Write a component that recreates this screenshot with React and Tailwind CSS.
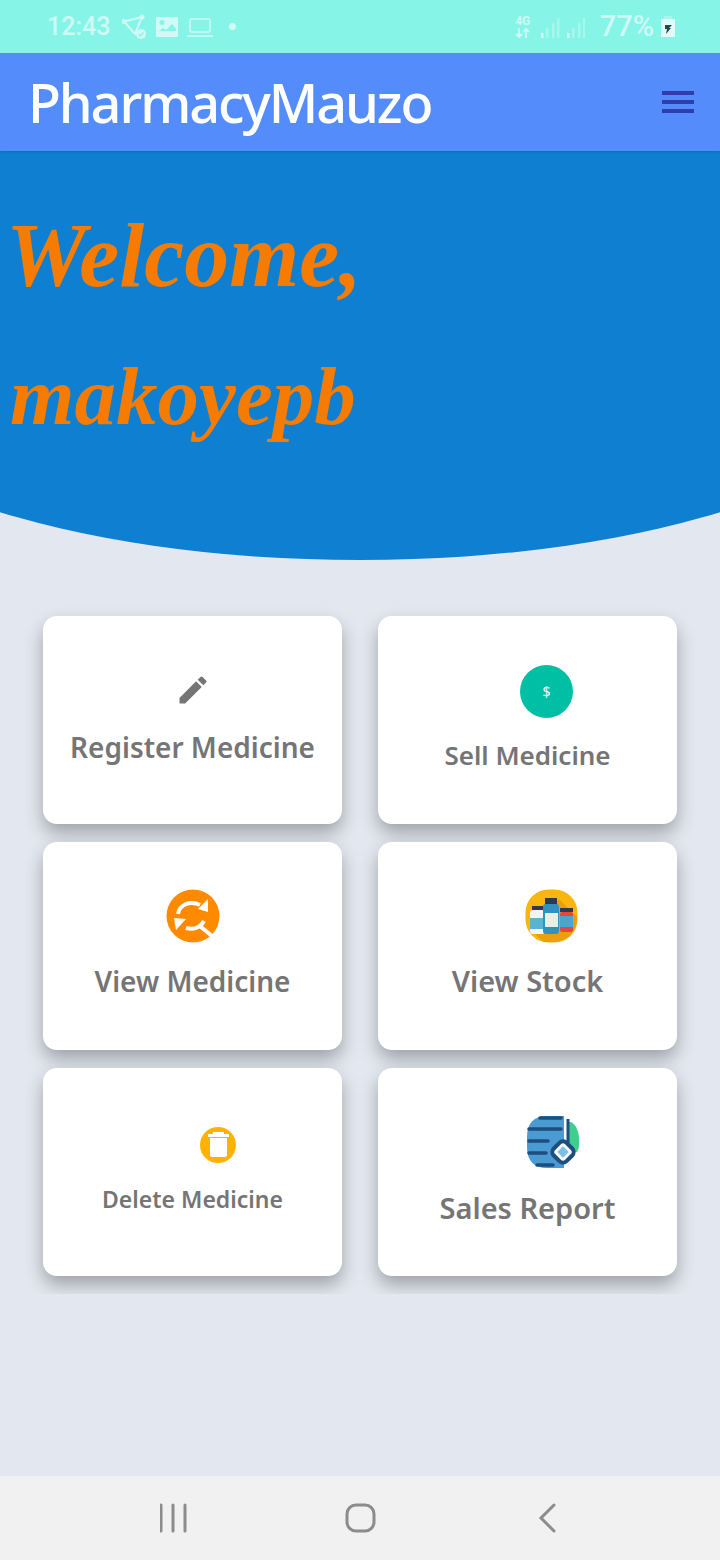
import React from "react";
import { MdEdit } from "react-icons/md";

const SellIcon = () => (
  <div className="flex h-[53px] w-[53px] items-center justify-center rounded-full bg-[#00bfa5] text-[14px] text-white">
    $
  </div>
);

const SearchSyncIcon = () => (
  <svg width="54" height="54" viewBox="0 0 54 54">
    <circle cx="27" cy="27" r="26.5" fill="#ff8a00" />
    <g fill="none" stroke="#fff" strokeWidth="4">
      <path d="M12 25c1-9 12-14 22-9" />
      <path d="M20 39c7 2 14 0 18-7" />
      <path d="M35 38l11 9" strokeLinecap="round" />
    </g>
    <polygon points="32,20 42,10 42,23" fill="#fff" />
    <polygon points="8,29 20,30 10,41" fill="#fff" />
  </svg>
);

const StockIcon = () => (
  <svg width="54" height="54" viewBox="0 0 54 54">
    <rect x="0.5" y="0.5" width="52" height="53" rx="23" fill="#fbb50f" />
    <path d="M34 10l18 18v3a23 23 0 0 1-23 22H19L6 42z" fill="#e9a00c" />
    <rect x="7" y="17" width="12" height="5" fill="#2f3a4a" />
    <rect x="5" y="21" width="15" height="24" rx="3" fill="#f2f4f4" />
    <rect x="5" y="29" width="15" height="11" fill="#58b4d1" />
    <rect x="20" y="9" width="12" height="7" fill="#2f3a4a" />
    <rect x="18" y="15" width="16" height="30" rx="3" fill="#2f93c0" />
    <rect x="20" y="24" width="13" height="14" fill="#e8efe3" />
    <rect x="35" y="19" width="13" height="4" fill="#2f3a4a" />
    <rect x="35" y="23" width="13" height="20" rx="2" fill="#e8453c" />
    <rect x="35" y="27" width="13" height="11" fill="#4ba5cf" />
  </svg>
);

const TrashIcon = () => (
  <svg width="36" height="36" viewBox="0 0 36 36">
    <circle cx="18" cy="18" r="18" fill="#ffb300" />
    <path d="M13 5h11v2h5v3H8V7h5z" fill="#fff" />
    <path d="M10 11h17v17a2 2 0 0 1-2 2H12a2 2 0 0 1-2-2z" fill="#fff" />
  </svg>
);

const ReportIcon = () => (
  <svg width="54" height="54" viewBox="0 0 54 54">
    <path d="M40 7h4c5 3 8 9 8 17v6c0 3-1 5-2 7H40z" fill="#3ecf8e" />
    <path d="M20 1h17v52H20C7 53 0 46 0 32V22C0 8 7 1 20 1z" fill="#4a9ad4" />
    <rect x="37" y="1" width="4" height="50" fill="#f4f8fb" />
    <path d="M41 4v24" stroke="#1d4e7e" strokeWidth="3" />
    <g stroke="#1d4e7e" strokeWidth="3.5" strokeLinecap="round">
      <path d="M13 3h21M2 14h32M2 26h19M2 38h17M10 50h16" />
    </g>
    <rect x="27" y="28" width="18" height="18" rx="5" transform="rotate(45 36 37)" fill="#f4f8fb" stroke="#1d4e7e" strokeWidth="4" />
    <rect x="32" y="33" width="8" height="8" transform="rotate(45 36 37)" fill="#7cc0e8" />
  </svg>
);

const Card = ({ title, className, textClass, children }) => (
  <div className="px-[18px] pt-[18px]">
    <div className={`flex h-[208px] w-[299px] flex-col items-center rounded-[14px] bg-white shadow-[0_9px_18px_rgba(0,0,0,0.3)] ${className}`}>
      {children}
      <div className={`leading-10 font-semibold text-[#757575] ${textClass}`}>{title}</div>
    </div>
  </div>
);

const StatusBar = () => (
  <div className="flex h-[53px] items-center justify-between bg-[#87f4e8] pr-[47px] pl-[47px] font-['Roboto',sans-serif] text-[#cffaf5]">
    <div className="flex items-center">
      <span className="text-[25px] font-medium">12:43</span>
      <svg className="ml-3" width="26" height="26" viewBox="0 0 26 26" fill="none" stroke="#cffaf5" strokeWidth="2">
        <path d="M2 7.5L20 3 13 20z" />
        <circle cx="2" cy="7.5" r="1.5" fill="#cffaf5" />
        <circle cx="20" cy="3" r="1.5" fill="#cffaf5" />
        <circle cx="19" cy="20" r="5" fill="#cffaf5" stroke="none" />
        <path d="M16.5 20l2 2 3-3.5" stroke="#87f4e8" strokeWidth="1.4" />
      </svg>
      <svg className="ml-2" width="22" height="20" viewBox="0 0 22 20">
        <path d="M1 0h20a1 1 0 0 1 1 1v18a1 1 0 0 1-1 1H1a1 1 0 0 1-1-1V1a1 1 0 0 1 1-1z" fill="#cffaf5" />
        <circle cx="6" cy="5.5" r="2.5" fill="#87f4e8" />
        <path d="M2 15l5-4 3 2 6-6 4 5v2H2z" fill="#87f4e8" />
      </svg>
      <svg className="ml-[9px]" width="26" height="20" viewBox="0 0 26 20" fill="none" stroke="#cffaf5" strokeWidth="1.6">
        <rect x="3" y="2" width="20" height="13" rx="1" />
        <path d="M0 19h26" />
      </svg>
      <div className="ml-4 h-[7px] w-[7px] rounded-full bg-[#cffaf5]" />
    </div>
    <div className="mr-[-2px] flex items-center">
      <div className="flex w-[16px] flex-col items-center text-[12px] leading-[11px] font-bold">
        <span>4G</span>
        <svg className="mt-[1px]" width="15" height="10" viewBox="0 0 15 10" fill="none" stroke="#cffaf5" strokeWidth="1.8">
          <path d="M4 0v9M1 6l3 3 3-3M11 10V1M8 4l3-3 3 3" />
        </svg>
      </div>
      <svg className="ml-[10px]" width="44" height="22" viewBox="0 0 44 22">
        <rect x="0" y="17" width="2.5" height="5" fill="#cffaf5" />
        <rect x="5" y="12" width="2.5" height="10" fill="#a8f7ec" />
        <rect x="11" y="7" width="2.5" height="15" fill="#a8f7ec" />
        <rect x="16" y="2" width="2.5" height="20" fill="#a8f7ec" />
        <rect x="26" y="17" width="2.5" height="5" fill="#cffaf5" />
        <rect x="31" y="12" width="2.5" height="10" fill="#a8f7ec" />
        <rect x="37" y="7" width="2.5" height="15" fill="#a8f7ec" />
        <rect x="42" y="2" width="2.5" height="20" fill="#a8f7ec" />
      </svg>
      <span className="ml-[15px] text-[29px] font-medium">77%</span>
      <svg className="ml-[7px]" width="14" height="21" viewBox="0 0 14 21">
        <rect x="3" y="0" width="8" height="3" fill="#a8f7ec" />
        <rect x="0" y="3" width="14" height="18" fill="#dffcf8" />
        <path d="M4 9h7l-3 3h2l-5 6 1-5H4z" fill="#26464a" />
      </svg>
    </div>
  </div>
);

export default function App() {
  return (
    <div className="flex h-[1560px] w-[720px] flex-col overflow-hidden bg-[#e3e8f0] font-['Noto_Sans',sans-serif]">
      <StatusBar />

      <div className="z-10 flex h-[98px] items-center justify-between bg-[#548cfc] pr-[26px] pl-[28px] shadow-[0_1px_2px_rgba(0,0,0,0.15)]">
        <span className="text-[54px] font-medium tracking-[-2.1px] text-white">PharmacyMauzo</span>
        <div className="flex w-[32px] flex-col gap-[5px]">
          <div className="h-[4px] bg-[#2f3eab]" />
          <div className="h-[4px] bg-[#2f3eab]" />
          <div className="h-[4px] bg-[#2f3eab]" />
        </div>
      </div>

      <div className="h-[409px] overflow-hidden">
        <div className="ml-[-180px] h-[409px] w-[1080px] rounded-b-[540px_188px] bg-[#0e7fd1] pt-[39px] pl-[186px] font-['Liberation_Serif',serif] text-[90px] leading-[132px] font-bold text-[#f57c00] italic">
          <div>Welcome,</div>
          <div className="mt-[8px] ml-[4px] text-[83px]">makoyepb</div>
        </div>
      </div>

      <div className="mt-[38px] ml-[25px] grid w-[670px] grid-cols-2 overflow-hidden pb-[18px]">
        <Card title="Register Medicine" className="pt-[56px]" textClass="mt-[19px] text-[28px]">
          <MdEdit size={36} color="#757575" />
        </Card>
        <Card title="Sell Medicine" className="pt-[49px]" textClass="mt-[17px] text-[26px]">
          <div className="ml-[38px]"><SellIcon /></div>
        </Card>
        <Card title="View Medicine" className="pt-[47px]" textClass="mt-[18px] text-[28px]">
          <SearchSyncIcon />
        </Card>
        <Card title="View Stock" className="pt-[47px]" textClass="mt-[18px] text-[29px]">
          <div className="ml-[48px]"><StockIcon /></div>
        </Card>
        <Card title="Delete Medicine" className="pt-[59px]" textClass="mt-[16px] text-[23px]">
          <div className="ml-[50px]"><TrashIcon /></div>
        </Card>
        <Card title="Sales Report" className="pt-[47px]" textClass="mt-[19px] text-[29px]">
          <div className="ml-[52px]"><ReportIcon /></div>
        </Card>
      </div>

      <div className="mt-auto flex h-[84px] items-center justify-center bg-[#f1f1f1] pl-[40px]">
        <svg width="440" height="30" viewBox="0 0 440 30" fill="none" stroke="#8c8c8c" strokeLinecap="round">
          <path d="M1 2v26M13 2v26M25 2v26" strokeWidth="3" />
          <rect x="187" y="2" width="27" height="26" rx="9" strokeWidth="3" />
          <path d="M394 2l-13 13 13 13" strokeWidth="3" />
        </svg>
      </div>
    </div>
  );
}
